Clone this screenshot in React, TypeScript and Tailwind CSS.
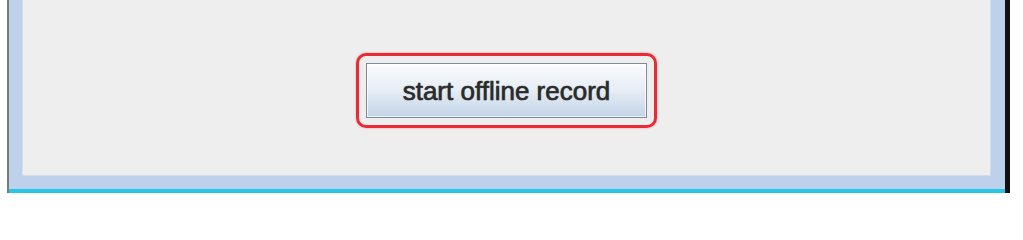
export default function App() {
  return (
    <div className="h-[204px] w-[1023px] bg-white overflow-hidden">
      <div className="ml-[7px] flex h-[193px] w-[1003px]">
        <div className="w-[2px] bg-[#7a7a7a]" />
        <div className="flex flex-1 flex-col">
          <div className="flex flex-1 bg-[#bdd1ea] pb-[13px] pl-[13px] pr-[14px]">
            <div className="flex flex-1 justify-center border border-t-0 border-[#d3deec] bg-[#eeeeee] pt-[53px]">
              <div className="h-[75px] rounded-[10px] border-[3px] border-[#ec2a33] p-[7px] shadow-[0_0_2px_rgba(236,42,51,0.5)]">
                <button
                  type="button"
                  className="flex h-[55px] w-[281px] items-center justify-center border border-[#7d8a98] bg-gradient-to-b from-[#fafcfe] via-[#e6edf5] to-[#c3d4e7] text-[26px] leading-none text-[#2a2a2a] shadow-[inset_0_0_0_1px_rgba(255,255,255,0.7)] [font-family:'Liberation_Sans',Arial,sans-serif] [-webkit-text-stroke:0.5px_#333] [text-shadow:0_0_1px_rgba(30,30,30,0.7)]"
                >
                  start offline record
                </button>
              </div>
            </div>
          </div>
          <div className="h-[4px] bg-[#27c6e6]" />
        </div>
        <div className="w-[5px] bg-[#111111]" />
      </div>
    </div>
  );
}
